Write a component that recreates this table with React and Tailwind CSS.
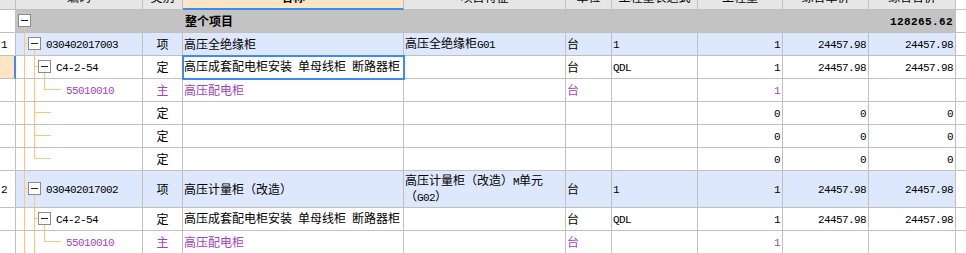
import React from 'react'

const COLS = 'grid grid-cols-[16px_127px_40px_221px_162px_46px_86px_85px_86px_87px_1fr]'
const MONO = "font-['Liberation_Mono',monospace] text-[11px] tracking-[-0.6px]"

const heads = ['', '编码', '类别', '名称', '项目特征', '单位', '工程量表达式', '工程量', '综合单价', '综合合价']

// tree guide segments, offsets are from the left edge of the code column
const SEG = {
  v0: 'left-[8px] top-0 bottom-0 w-px',
  v0b: 'left-[8px] top-[calc(50%-1px)] bottom-0 w-px',
  h1: 'left-[8px] top-[calc(50%-1px)] h-px w-[4px]',
  v1: 'left-[18px] top-0 bottom-0 w-px',
  v1b: 'left-[18px] top-[calc(50%-1px)] bottom-0 w-px',
  v1t: 'left-[18px] top-0 h-[calc(50%-1px)] w-px',
  h2: 'left-[18px] top-[calc(50%-1px)] h-px w-[4px]',
  v2b: 'left-[28px] top-[calc(50%-1px)] bottom-0 w-px',
  v2t: 'left-[28px] top-0 h-[calc(50%-1px)] w-px',
  h3: 'left-[28px] top-[calc(50%-1px)] h-px w-[17px]',
  hd: 'left-[18px] top-[calc(50%-1px)] h-px w-[17px]',
}

const BOX_ML = { 0: 'ml-[2px]', 1: 'ml-[12px]', 2: 'ml-[22px]' }

const rows = [
  { root: true, box: true, lv: 0, segs: ['v0b'], name: '整个项目', total: '128265.62' },
  {
    n: '1', item: true, box: true, lv: 1, code: '030402017003', type: '项', name: '高压全绝缘柜',
    feat: '高压全绝缘柜G01', unit: '台', expr: '1', qty: '1', price: '24457.98', total: '24457.98',
    segs: ['v0', 'h1', 'v1b'],
  },
  {
    sel: true, box: true, lv: 2, code: 'C4-2-54', type: '定', name: '高压成套配电柜安装 单母线柜 断路器柜',
    unit: '台', expr: 'QDL', qty: '1', price: '24457.98', total: '24457.98', segs: ['v0', 'v1', 'h2', 'v2b'],
  },
  { purple: true, lv: 3, code: '55010010', type: '主', name: '高压配电柜', unit: '台', qty: '1', segs: ['v0', 'v1', 'v2t', 'h3'] },
  { type: '定', qty: '0', price: '0', total: '0', segs: ['v0', 'v1', 'hd'] },
  { type: '定', qty: '0', price: '0', total: '0', segs: ['v0', 'v1', 'hd'] },
  { type: '定', qty: '0', price: '0', total: '0', segs: ['v0', 'v1t', 'hd'] },
  {
    n: '2', item: true, tall: true, box: true, lv: 1, code: '030402017002', type: '项', name: '高压计量柜（改造）',
    feat: '高压计量柜（改造）M单元（G02）', unit: '台', expr: '1', qty: '1', price: '24457.98', total: '24457.98',
    segs: ['v0', 'h1', 'v1b'],
  },
  {
    box: true, lv: 2, code: 'C4-2-54', type: '定', name: '高压成套配电柜安装 单母线柜 断路器柜',
    unit: '台', expr: 'QDL', qty: '1', price: '24457.98', total: '24457.98', segs: ['v0', 'v1', 'h2', 'v2b'],
  },
  { purple: true, lv: 3, code: '55010010', type: '主', name: '高压配电柜', unit: '台', qty: '1', segs: ['v0', 'v1', 'v2t', 'h3'] },
]

// latin runs get the narrow mono face, CJK stays in Noto
function Txt({ s }) {
  if (!s) return null
  return s
    .split(/([\x20-\x7e]+)/)
    .filter(Boolean)
    .map((p, i) =>
      /^[\x20-\x7e]+$/.test(p) ? (
        <span key={i} className={MONO}>{p}</span>
      ) : (
        <span key={i}>{p}</span>
      )
    )
}

function Cell({ className = '', align = 'left', wrap, children }) {
  const pos = align === 'right' ? 'pr-[2px] text-right' : align === 'center' ? 'text-center' : 'pl-px'
  return (
    <div className={`flex items-center overflow-hidden border-r border-b border-[#c0c0c0] ${className}`}>
      <div className={`w-full ${pos} ${wrap ? 'leading-[13px]' : 'whitespace-nowrap leading-[22px]'}`}>{children}</div>
    </div>
  )
}

function Box({ className }) {
  return (
    <span
      className={`relative z-[1] mb-px flex h-[13px] w-[13px] shrink-0 items-center justify-center border border-[#8a8a8a] bg-white ${className}`}
    >
      <span className="h-px w-[7px] bg-[#222]" />
    </span>
  )
}

function CodeCell({ r, bg }) {
  return (
    <div className={`relative flex items-center overflow-hidden whitespace-nowrap border-r border-b border-[#c0c0c0] leading-[22px] ${bg}`}>
      {r.segs.map((s) => (
        <span key={s} className={`absolute bg-[#fcc878] ${SEG[s]}`} />
      ))}
      {r.box && <Box className={BOX_ML[r.lv]} />}
      {r.code && (
        <span className={r.box ? 'ml-[5px]' : 'ml-[50px]'}>
          <Txt s={r.code} />
        </span>
      )}
    </div>
  )
}

function Row({ r }) {
  const bg = r.root ? 'bg-[#c3c3c3]' : r.item ? 'bg-[#dde8fc]' : 'bg-white'
  const ink = r.purple ? 'text-[#a33fc6]' : ''
  return (
    <div className={`${COLS} ${r.tall ? 'h-[37px]' : 'h-[23px]'} ${ink}`}>
      <Cell className={r.sel ? 'border-r-2 border-r-[#3c8cf0] bg-[#fde5c6]' : 'bg-white'}>
        <Txt s={r.n} />
      </Cell>
      <CodeCell r={r} bg={bg} />
      <Cell className={bg} align="center">{r.type}</Cell>
      <Cell className={`${bg} ${r.sel ? 'relative z-10 outline-2 -outline-offset-1 outline-[#3c8cf0]' : ''}`}>
        {r.root ? <span className="pl-px font-bold">{r.name}</span> : <Txt s={r.name} />}
      </Cell>
      <Cell className={bg} wrap={r.tall}>
        <Txt s={r.feat} />
      </Cell>
      <Cell className={bg}>{r.unit}</Cell>
      <Cell className={bg}>
        <Txt s={r.expr} />
      </Cell>
      <Cell className={bg} align="right">
        <Txt s={r.qty} />
      </Cell>
      <Cell className={bg} align="right">
        <Txt s={r.price} />
      </Cell>
      <Cell className={bg} align="right">
        {r.root ? (
          <span className="font-['Liberation_Mono',monospace] text-[11px] font-bold tracking-[0.4px]">{r.total}</span>
        ) : (
          <Txt s={r.total} />
        )}
      </Cell>
      <div className="border-b border-[#c0c0c0]" />
    </div>
  )
}

export default function App() {
  return (
    <div className="h-[253px] w-[966px] overflow-hidden bg-white font-['Noto_Sans_CJK_SC',sans-serif] text-[12px] text-black">
      {/* column header, scrolled so only the bottom of the labels shows */}
      <div className={`${COLS} h-[10px]`}>
        {heads.map((h, i) => (
          <div
            key={i}
            className={
              i === 3
                ? 'overflow-hidden border-r border-b-2 border-r-[#c0c0c0] border-b-[#3c8cf0] bg-[#fde5c6] font-bold'
                : 'overflow-hidden border-r border-b border-[#c0c0c0] bg-[#e6e6e6]'
            }
          >
            <div className="-mt-[9px] whitespace-nowrap text-center leading-[12px]">{h}</div>
          </div>
        ))}
        <div className="border-b border-[#c0c0c0]" />
      </div>
      {rows.map((r, i) => (
        <Row key={i} r={r} />
      ))}
    </div>
  )
}
